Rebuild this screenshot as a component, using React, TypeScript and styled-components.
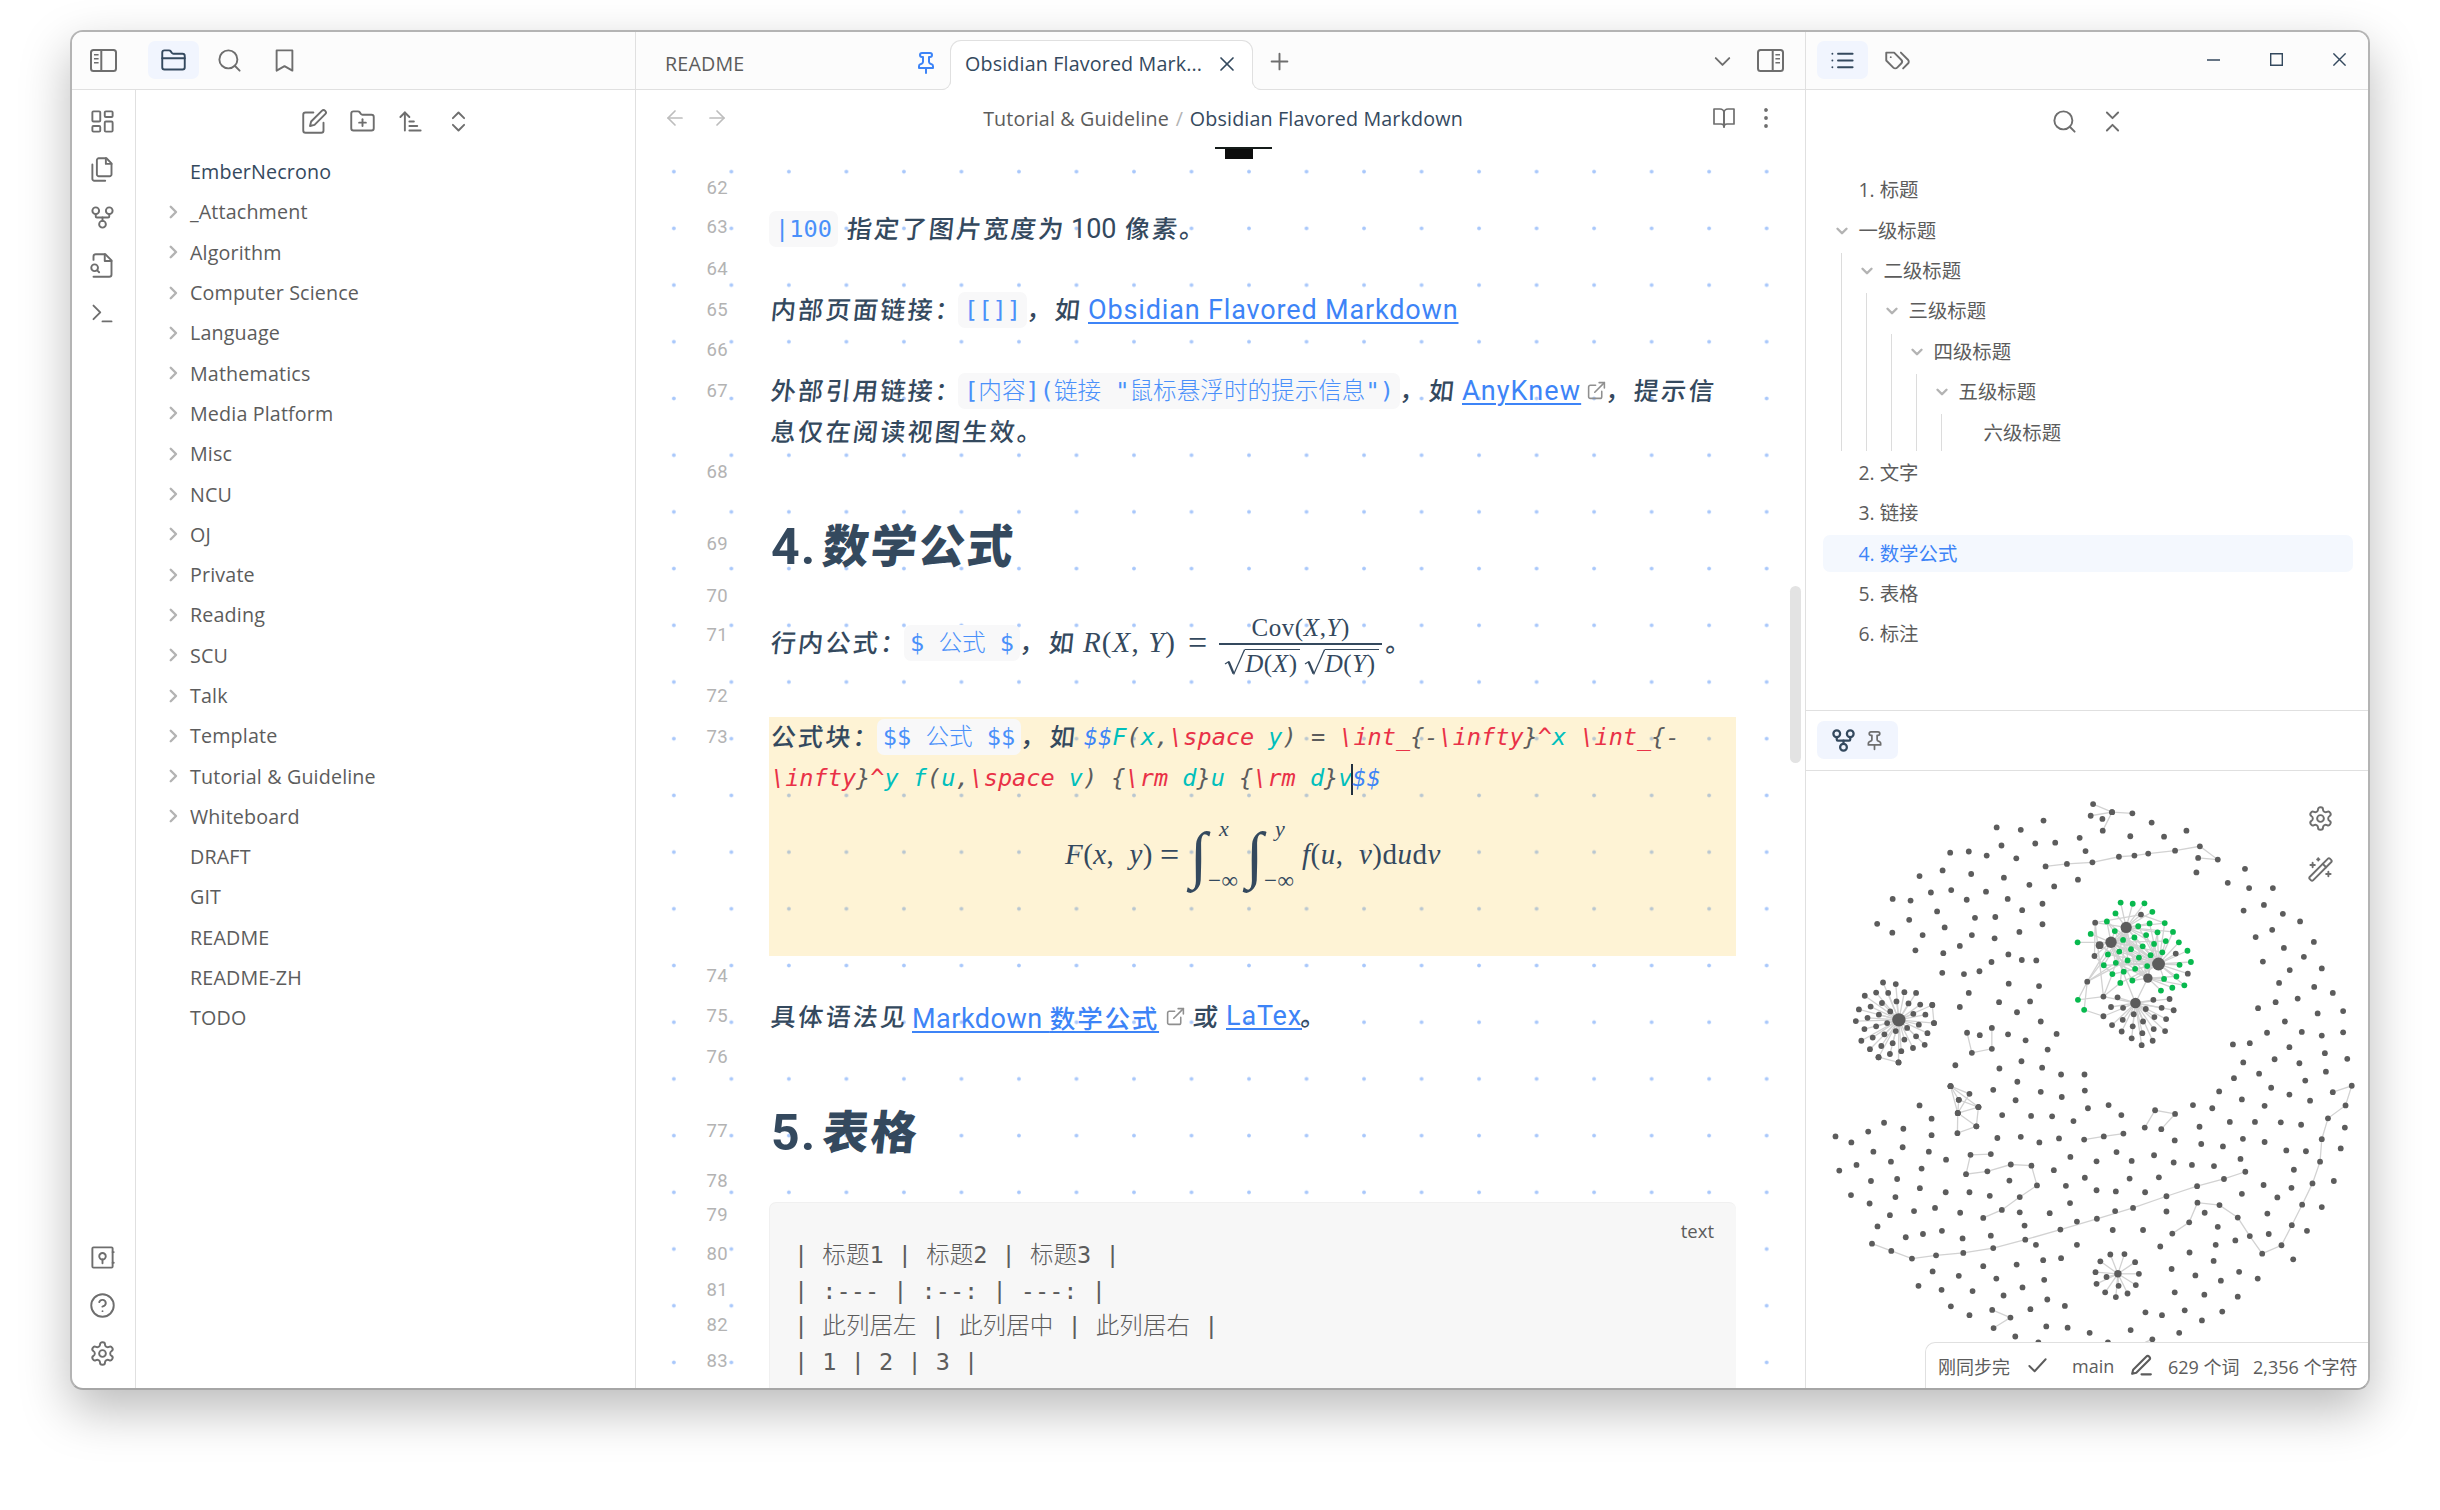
import React from "react";
import styled, { createGlobalStyle, css } from "styled-components";

const ui = `"Open Sans", "Noto Sans", "Noto Sans CJK SC", sans-serif`;
const prose = `Roboto, "Noto Sans CJK SC", sans-serif`;
const code = `"DejaVu Sans Mono", "Noto Sans CJK SC", monospace`;
const serif = `"Liberation Serif", serif`;

const ink = "#34495e";
const muted = "#5c5c5c";
const faint = "#b3b3b3";
const line = "#e0e0e0";
const blue = "#3d84f7";
const red = "#e93147";
const teal = "#00bfbc";

const Global = createGlobalStyle`
  * { box-sizing: border-box; }
  body { margin: 0; background: #fff; font-family: ${ui}; color: ${muted}; }
`;

/* ---------- icons ---------- */

const Svg = styled.svg<{ $size: number; $stroke: number }>`
  display: block;
  flex: none;
  width: ${(p) => p.$size}px;
  height: ${(p) => p.$size}px;
  fill: none;
  stroke: currentColor;
  stroke-width: ${(p) => p.$stroke};
  stroke-linecap: round;
  stroke-linejoin: round;
`;

const icons: Record<string, string[]> = {
  folder: ["M20 20a2 2 0 0 0 2-2V8a2 2 0 0 0-2-2h-7.9a2 2 0 0 1-1.69-.9L9.6 3.9A2 2 0 0 0 7.93 3H4a2 2 0 0 0-2 2v13a2 2 0 0 0 2 2Z", "M2 10h20"],
  search: ["M11 3a8 8 0 1 0 0 16a8 8 0 1 0 0-16", "m21 21-4.3-4.3"],
  bookmark: ["m19 21-7-4-7 4V3h14z"],
  dashboard: ["M4 3h5a1 1 0 0 1 1 1v7a1 1 0 0 1-1 1H4a1 1 0 0 1-1-1V4a1 1 0 0 1 1-1z", "M15 3h5a1 1 0 0 1 1 1v3a1 1 0 0 1-1 1h-5a1 1 0 0 1-1-1V4a1 1 0 0 1 1-1z", "M15 12h5a1 1 0 0 1 1 1v7a1 1 0 0 1-1 1h-5a1 1 0 0 1-1-1v-7a1 1 0 0 1 1-1z", "M4 16h5a1 1 0 0 1 1 1v3a1 1 0 0 1-1 1H4a1 1 0 0 1-1-1v-3a1 1 0 0 1 1-1z"],
  files: ["M15.5 2H8.6c-.4 0-.8.2-1.1.5-.3.3-.5.7-.5 1.1v12.8c0 .4.2.8.5 1.1.3.3.7.5 1.1.5h9.8c.4 0 .8-.2 1.1-.5.3-.3.5-.7.5-1.1V6.5L15.5 2z", "M3 7.6v12.8c0 .4.2.8.5 1.1.3.3.7.5 1.1.5h9.8", "M15 2v5h5"],
  fork: ["M12 15a3 3 0 1 0 0 6a3 3 0 1 0 0-6", "M6 3a3 3 0 1 0 0 6a3 3 0 1 0 0-6", "M18 3a3 3 0 1 0 0 6a3 3 0 1 0 0-6", "M18 9v2c0 .6-.4 1-1 1H7c-.6 0-1-.4-1-1V9", "M12 12v3"],
  fileSearch: ["M4 22h14a2 2 0 0 0 2-2V7.5L14.5 2H6a2 2 0 0 0-2 2v3", "M14 2v6h6", "M5 11a3 3 0 1 0 0 6a3 3 0 1 0 0-6", "m9 18-1.5-1.5"],
  terminal: ["m4 17 6-6-6-6", "M12 19h8"],
  vault: ["M4 3h16a1 1 0 0 1 1 1v16a1 1 0 0 1-1 1H4a1 1 0 0 1-1-1V4a1 1 0 0 1 1-1z", "M12 8a2.9 2.9 0 1 0 0 5.8a2.9 2.9 0 1 0 0-5.8", "M12 13.8v3.4", "M21 7.2h1", "M21 16.6h1"],
  help: ["M12 2a10 10 0 1 0 0 20a10 10 0 1 0 0-20", "M9.09 9a3 3 0 0 1 5.83 1c0 2-3 3-3 3", "M12 17h.01"],
  settings: ["M12.22 2h-.44a2 2 0 0 0-2 2v.18a2 2 0 0 1-1 1.73l-.43.25a2 2 0 0 1-2 0l-.15-.08a2 2 0 0 0-2.73.73l-.22.38a2 2 0 0 0 .73 2.73l.15.1a2 2 0 0 1 1 1.72v.51a2 2 0 0 1-1 1.74l-.15.09a2 2 0 0 0-.73 2.73l.22.38a2 2 0 0 0 2.73.73l.15-.08a2 2 0 0 1 2 0l.43.25a2 2 0 0 1 1 1.73V20a2 2 0 0 0 2 2h.44a2 2 0 0 0 2-2v-.18a2 2 0 0 1 1-1.73l.43-.25a2 2 0 0 1 2 0l.15.08a2 2 0 0 0 2.73-.73l.22-.39a2 2 0 0 0-.73-2.73l-.15-.08a2 2 0 0 1-1-1.74v-.5a2 2 0 0 1 1-1.74l.15-.09a2 2 0 0 0 .73-2.73l-.22-.38a2 2 0 0 0-2.73-.73l-.15.08a2 2 0 0 1-2 0l-.43-.25a2 2 0 0 1-1-1.73V4a2 2 0 0 0-2-2z", "M12 9a3 3 0 1 0 0 6a3 3 0 1 0 0-6"],
  edit: ["M11 4H4a2 2 0 0 0-2 2v14a2 2 0 0 0 2 2h14a2 2 0 0 0 2-2v-7", "M18.5 2.5a2.12 2.12 0 0 1 3 3L12 15l-4 1 1-4Z"],
  folderPlus: ["M12 10v6", "M9 13h6", "M20 20a2 2 0 0 0 2-2V8a2 2 0 0 0-2-2h-7.9a2 2 0 0 1-1.69-.9L9.6 3.9A2 2 0 0 0 7.93 3H4a2 2 0 0 0-2 2v13a2 2 0 0 0 2 2Z"],
  sort: ["m3 8 4-4 4 4", "M7 4v16", "M11 12h4", "M11 16h7", "M11 20h10"],
  expand: ["m7 15 5 5 5-5", "m7 9 5-5 5 5"],
  collapse: ["m7 20 5-5 5 5", "m7 4 5 5 5-5"],
  pin: ["M12 17v5", "M5 17h14v-1.76a2 2 0 0 0-1.11-1.79l-1.78-.9A2 2 0 0 1 15 10.76V6h1a2 2 0 0 0 0-4H8a2 2 0 0 0 0 4h1v4.76a2 2 0 0 1-1.11 1.79l-1.78.9A2 2 0 0 0 5 15.24Z"],
  close: ["M18 6 6 18", "m6 6 12 12"],
  plus: ["M5 12h14", "M12 5v14"],
  down: ["m6 9 6 6 6-6"],
  right: ["m9 5 7 7-7 7"],
  back: ["m12 19-7-7 7-7", "M19 12H5"],
  forward: ["M5 12h14", "m12 5 7 7-7 7"],
  book: ["M2 3h6a4 4 0 0 1 4 4v14a3 3 0 0 0-3-3H2z", "M22 3h-6a4 4 0 0 0-4 4v14a3 3 0 0 1 3-3h7z"],
  more: ["M12 11.2a.8.8 0 1 0 0 1.6a.8.8 0 1 0 0-1.6", "M12 3.2a.8.8 0 1 0 0 1.6a.8.8 0 1 0 0-1.6", "M12 19.2a.8.8 0 1 0 0 1.6a.8.8 0 1 0 0-1.6"],
  list: ["M8 6h13", "M8 12h13", "M8 18h13", "M3 6h.01", "M3 12h.01", "M3 18h.01"],
  tags: ["M9 5H2v7l6.29 6.29c.94.94 2.48.94 3.42 0l3.58-3.58c.94-.94.94-2.48 0-3.42L9 5Z", "M6 9.01V9", "m15 5 6.3 6.3a2.4 2.4 0 0 1 0 3.4L17 19"],
  wand: ["m21.64 3.64-1.28-1.28a1.21 1.21 0 0 0-1.72 0L2.36 18.64a1.21 1.21 0 0 0 0 1.72l1.28 1.28a1.2 1.2 0 0 0 1.72 0L21.64 5.36a1.2 1.2 0 0 0 0-1.72Z", "m14 7 3 3", "M5 6v4", "M19 14v4", "M10 2v2", "M7 8H3", "M21 16h-4", "M11 3H9"],
  check: ["M20.5 5.5 9 18l-5.5-5.5"],
  pen: ["M12 20.5h9", "M16.5 3.5a2.12 2.12 0 0 1 3 3L7 19l-4 1 1-4Z"],
  external: ["M18 13v6a2 2 0 0 1-2 2H5a2 2 0 0 1-2-2V8a2 2 0 0 1 2-2h6", "M15 3h6v6", "M10 14 21 3"],
};

const Icon = ({ name, size = 27, stroke = 1.7 }: { name: string; size?: number; stroke?: number }) => (
  <Svg viewBox="0 0 24 24" $size={size} $stroke={stroke}>
    {icons[name].map((d) => (
      <path key={d} d={d} />
    ))}
  </Svg>
);

const PanelSvg = styled.svg<{ $flip?: boolean }>`
  display: block;
  width: 27px;
  height: 23px;
  fill: none;
  stroke: currentColor;
  stroke-width: 2;
  transform: ${(p) => (p.$flip ? "scaleX(-1)" : "none")};
`;

const PanelIcon = ({ flip }: { flip?: boolean }) => (
  <PanelSvg $flip={flip} viewBox="0 0 27 23">
    <rect x="1" y="1" width="25" height="21" rx="2.5" />
    <path d="M11.3 1v21" />
    <path d="M4 5.8h4.6M4 9.8h4.6M4 13.8h4.6" strokeWidth="1.6" />
  </PanelSvg>
);

/* ---------- window frame ---------- */

const Desktop = styled.div`
  width: 2440px;
  height: 1510px;
  padding: 30px 70px;
  overflow: hidden;
`;

const Window = styled.div`
  display: flex;
  width: 2300px;
  height: 1360px;
  border: 2px solid #b4b4b4;
  border-bottom-color: #a6a6a6;
  border-radius: 13px;
  overflow: hidden;
  background: #fff;
  box-shadow: 0 20px 50px rgba(0, 0, 0, 0.27);
`;

const Column = styled.section<{ $w: number; $edge?: boolean }>`
  display: flex;
  flex-direction: column;
  flex: none;
  width: ${(p) => p.$w}px;
  height: 100%;
  border-right: ${(p) => (p.$edge ? `1px solid ${line}` : "none")};
`;

const Bar = styled.header`
  display: flex;
  align-items: flex-start;
  flex: none;
  height: 58px;
  background: #fcfcfc;
  border-bottom: 1px solid ${line};
`;

const Spacer = styled.div`
  flex: 1;
`;

const IconButton = styled.div<{ $w?: number; $h?: number; $on?: boolean; $tone?: string }>`
  display: flex;
  align-items: center;
  justify-content: center;
  flex: none;
  gap: 7px;
  width: ${(p) => p.$w ?? 48}px;
  height: ${(p) => p.$h ?? 48}px;
  border-radius: 7px;
  background: ${(p) => (p.$on ? "#f1f5fe" : "transparent")};
  color: ${(p) => p.$tone ?? (p.$on ? ink : "#6e6e6e")};
`;

const LeftTabs = styled.div`
  display: flex;
  gap: 4.5px;
  padding: 9px 0 0 18px;
`;

const ToggleSlot = styled.div<{ $pad: string }>`
  padding: ${(p) => p.$pad};
  color: #6e6e6e;
`;

/* ---------- left side ---------- */

const SideBody = styled.div`
  display: flex;
  flex: 1;
  min-height: 0;
`;

const Ribbon = styled.nav`
  display: flex;
  flex-direction: column;
  align-items: center;
  flex: none;
  width: 64px;
  padding: 7px 3px 11px 0;
  border-right: 1px solid ${line};
`;

const Explorer = styled.div`
  flex: 1;
  padding-top: 7.5px;
`;

const Tools = styled.div`
  display: flex;
  justify-content: center;
  padding-left: 2px;
`;

const Tree = styled.div`
  padding: 6px 0 0 29px;
`;

const TreeRow = styled.div<{ $strong?: boolean }>`
  display: flex;
  align-items: center;
  height: 40.3px;
  font-size: 19.7px;
  letter-spacing: 0.15px;
  color: ${(p) => (p.$strong ? ink : muted)};
`;

const Caret = styled.span`
  display: flex;
  flex: none;
  justify-content: center;
  width: 15px;
  margin-right: 10px;
  color: ${faint};
`;

const folders = ["_Attachment", "Algorithm", "Computer Science", "Language", "Mathematics", "Media Platform", "Misc", "NCU", "OJ", "Private", "Reading", "SCU", "Talk", "Template", "Tutorial & Guideline", "Whiteboard"];
const notes = ["DRAFT", "GIT", "README", "README-ZH", "TODO"];

const LeftSide = () => (
  <Column $w={564} $edge>
    <Bar>
      <ToggleSlot $pad="17px 13px 0 18px">
        <PanelIcon />
      </ToggleSlot>
      <LeftTabs>
        <IconButton $w={51} $h={38} $on><Icon name="folder" /></IconButton>
        <IconButton $w={51} $h={38}><Icon name="search" /></IconButton>
        <IconButton $w={51} $h={38}><Icon name="bookmark" /></IconButton>
      </LeftTabs>
    </Bar>
    <SideBody>
      <Ribbon>
        {["dashboard", "files", "fork", "fileSearch", "terminal"].map((n) => (
          <IconButton key={n}><Icon name={n} /></IconButton>
        ))}
        <Spacer />
        {["vault", "help", "settings"].map((n) => (
          <IconButton key={n}><Icon name={n} /></IconButton>
        ))}
      </Ribbon>
      <Explorer>
        <Tools>
          {["edit", "folderPlus", "sort", "expand"].map((n) => (
            <IconButton key={n}><Icon name={n} /></IconButton>
          ))}
        </Tools>
        <Tree>
          <TreeRow $strong><Caret />EmberNecrono</TreeRow>
          {folders.map((f) => (
            <TreeRow key={f}><Caret><Icon name="right" size={18} stroke={3.2} /></Caret>{f}</TreeRow>
          ))}
          {notes.map((f) => (
            <TreeRow key={f}><Caret />{f}</TreeRow>
          ))}
        </Tree>
      </Explorer>
    </SideBody>
  </Column>
);

/* ---------- tabs and view header ---------- */

const Tab = styled.div<{ $active?: boolean; $w: number }>`
  position: relative;
  display: flex;
  align-items: center;
  justify-content: space-between;
  flex: none;
  width: ${(p) => p.$w}px;
  height: 50px;
  margin-top: 8px;
  font-size: 19.7px;
  letter-spacing: 0.15px;
  white-space: nowrap;
  ${(p) =>
    p.$active
      ? css`
          padding: 0 13px 4px 14px;
          color: ${ink};
          background: #fff;
          border: 1px solid ${line};
          border-bottom: 0;
          border-radius: 11px 11px 0 0;
          &::before,
          &::after {
            content: "";
            position: absolute;
            bottom: 0;
            width: 18px;
            height: 18px;
            border-radius: 50%;
            box-shadow: inset 0 0 0 1px ${line}, 0 0 0 12px #fff;
          }
          &::before {
            left: -18px;
            clip-path: inset(50% -1px 0 50%);
          }
          &::after {
            right: -18px;
            clip-path: inset(50% 50% 0 -1px);
          }
        `
      : css`
          padding: 0 12px 4px 29px;
        `}
`;

const Tone = styled.span<{ $c: string; $m?: number }>`
  margin: 0 ${(p) => p.$m ?? 0}px;
  color: ${(p) => p.$c};
`;

const ViewHeader = styled.div`
  display: flex;
  align-items: center;
  justify-content: space-between;
  flex: none;
  height: 56px;
  padding: 0 18px;
`;

const Group = styled.div<{ $w: number }>`
  display: flex;
  width: ${(p) => p.$w}px;
`;

const Crumbs = styled.div`
  margin-left: 5px;
  font-size: 19.7px;
  letter-spacing: 0.15px;
  white-space: pre;
`;

/* ---------- editor ---------- */

const Editor = styled.div`
  position: relative;
  flex: 1;
  min-height: 0;
  overflow: hidden;
  background-image: radial-gradient(circle at 50% 50%, #a9c8fb 1.4px, rgba(169, 200, 251, 0) 2.3px);
  background-size: 57.53px 56.71px;
  background-position: 9.1px -2.7px;
`;

const Thumb = styled.div`
  position: absolute;
  top: 440px;
  right: 4px;
  width: 11px;
  height: 177px;
  border-radius: 6px;
  background: #e3e3e3;
`;

const ImageTail = styled.div`
  display: flex;
  flex-direction: column;
  height: 22px;
  padding: 1px 0 0 579px;
  &::before {
    content: "";
    width: 57px;
    height: 2px;
    background: #151c1a;
  }
  &::after {
    content: "";
    width: 28px;
    height: 10px;
    margin-left: 10px;
    background: #0d0d0d;
  }
`;

const Row = styled.div<{ $h?: number }>`
  display: flex;
  height: ${(p) => p.$h ?? 40.5}px;
`;

const Num = styled.div<{ $top?: number }>`
  flex: none;
  width: 92px;
  margin-right: 41px;
  margin-top: ${(p) => p.$top ?? 0}px;
  font: 18.5px/40.5px ${prose};
  letter-spacing: 0.3px;
  text-align: right;
  color: ${faint};
`;

const Body = styled.div<{ $top?: number; $mark?: boolean }>`
  width: 967px;
  padding: ${(p) => p.$top ?? 0}px 0 0 2px;
  background: ${(p) => (p.$mark ? "rgba(252,193,45,.2)" : "none")};
`;

const Line = styled.div`
  display: flex;
  align-items: center;
  height: 40.5px;
  white-space: pre;
  font-family: ${prose};
  font-size: 27px;
  color: ${ink};
`;

const Zh = styled.span<{ $w?: number; $pad?: number }>`
  flex: none;
  width: ${(p) => (p.$w ? `${p.$w}px` : "auto")};
  padding: 0 0 3px ${(p) => p.$pad ?? 0}px;
  font-size: 25px;
  font-weight: 500;
  letter-spacing: 2.35px;
  transform: skewX(-6deg);
`;

const Latin = styled.span<{ $w?: number }>`
  flex: none;
  width: ${(p) => (p.$w ? `${p.$w}px` : "auto")};
`;

const Link = styled.a<{ $w?: number; $gap?: number }>`
  flex: none;
  width: ${(p) => (p.$w ? `${p.$w}px` : "auto")};
  color: ${blue};
  letter-spacing: ${(p) => p.$gap ?? 0.85}px;
  text-decoration: underline;
  text-decoration-thickness: 2px;
  text-underline-offset: 3px;
  b {
    font-size: 25.5px;
    font-weight: 500;
    letter-spacing: 1.8px;
  }
`;

const Ext = styled.span<{ $w: number }>`
  flex: none;
  width: ${(p) => p.$w}px;
  padding-left: 5px;
  color: #8f8f8f;
`;

const Code = styled.code<{ $w: number; $shift?: number }>`
  display: flex;
  align-items: center;
  justify-content: center;
  flex: none;
  width: ${(p) => p.$w}px;
  height: 36px;
  margin-left: ${(p) => p.$shift ?? 0}px;
  border-radius: 7px;
  background: #f8f8f9;
  font: 300 23.6px/36px ${code};
  color: #4a90fa;
`;

const Tex = styled.span`
  padding-top: 1px;
  font: italic 23.55px/40px ${code};
  color: ${muted};
  i { color: ${red}; }
  b { color: ${teal}; font-weight: 400; }
  u { color: ${blue}; text-decoration: none; }
`;

const Cursor = styled.span`
  display: inline-block;
  width: 2px;
  height: 31px;
  margin: 0 -1px;
  vertical-align: middle;
  background: #22303f;
`;

const H1 = styled.h1`
  display: flex;
  align-items: center;
  height: 60px;
  margin: 0;
  font: 700 50px/60px ${prose};
  color: ${ink};
`;

const HNum = styled.span`
  width: 52px;
  letter-spacing: 1px;
`;

const HText = styled.span`
  font-size: 46px;
  font-weight: 900;
  letter-spacing: 2px;
  transform: skewX(-6deg);
`;

/* formulas */

const Math = styled.span<{ $size?: number; $w?: number; $gap?: number }>`
  display: inline-flex;
  align-items: center;
  flex: none;
  width: ${(p) => (p.$w ? `${p.$w}px` : "auto")};
  font: ${(p) => p.$size ?? 29}px/1 ${serif};
  letter-spacing: ${(p) => p.$gap ?? 0}px;
  color: ${ink};
  white-space: pre;
`;

const Frac = styled.span`
  display: flex;
  flex-direction: column;
  align-items: center;
  flex: none;
  width: 163px;
  margin: 3px 0 0 12px;
`;

const FracTop = styled.span`
  display: flex;
  height: 29px;
  padding-bottom: 2px;
`;

const FracBottom = styled.span`
  display: flex;
  gap: 4px;
  width: 100%;
  height: 31px;
  padding: 4px 0 0 5px;
  border-top: 2px solid ${ink};
`;

const Radical = styled.svg`
  width: 21px;
  height: 28px;
  fill: none;
  stroke: ${ink};
`;

const Radicand = styled.span`
  width: 54.5px;
  height: 26px;
  padding-top: 2px;
  border-top: 1.5px solid ${ink};
  font: 25px/24px ${serif};
  letter-spacing: 0.6px;
`;

const Root = ({ v }: { v: string }) => (
  <Math>
    <Radical viewBox="0 0 21 28">
      <path d="M1 16l4-2.5" strokeWidth="1.2" />
      <path d="M4.6 13.6l5 12" strokeWidth="2.4" />
      <path d="M9.6 26.6L20.6 1.6" strokeWidth="1.2" />
    </Radical>
    <Radicand><em>D</em>(<em>{v}</em>)</Radicand>
  </Math>
);

const Display = styled.div`
  display: flex;
  align-items: center;
  height: 76px;
  margin-top: 18px;
  padding: 2px 0 0 294px;
`;

const Integral = styled.span`
  display: flex;
  align-items: center;
  flex: none;
  width: 56px;
  height: 66px;
`;

const IntSign = styled.span`
  width: 18px;
  font: 63px/66px ${serif};
  color: ${ink};
`;

const Limits = styled.span`
  display: flex;
  flex-direction: column;
  justify-content: space-between;
  height: 72px;
  font: 22px/20px ${serif};
  color: ${ink};
  em { padding-left: 11px; }
`;

const Low = styled.span`
  font-size: 23px;
  letter-spacing: 0.6px;
`;

const Bounds = ({ v }: { v: string }) => (
  <Integral>
    <IntSign>∫</IntSign>
    <Limits><em>{v}</em><Low>−∞</Low></Limits>
  </Integral>
);

/* fenced block */

const Fence = styled.div<{ $first?: boolean }>`
  display: flex;
  justify-content: space-between;
  width: 967px;
  padding: 0 22px 0 24px;
  background: #f7f7f7;
  border-left: 1px solid #f0f0f0;
  ${(p) => p.$first && "border-top: 1px solid #f0f0f0; border-radius: 7px 7px 0 0;"}
  font: 300 23.55px/35.7px ${code};
  color: ${muted};
  white-space: pre;
`;

const Lang = styled.span`
  height: 10px;
  padding-top: 10px;
  font: 18.5px/36px ${ui};
`;

const fenceLines = ["| 标题1 | 标题2 | 标题3 |", "| :--- | :--: | ---: |", "| 此列居左 | 此列居中 | 此列居右 |", "| 1 | 2 | 3 |", "|    |    |    |"];

const Main = () => (
  <Column $w={1170} $edge>
    <Bar>
      <Tab $w={314}>README<Tone $c={blue}><Icon name="pin" size={24} stroke={2} /></Tone></Tab>
      <Tab $w={303} $active>Obsidian Flavored Mark...<Icon name="close" size={24} /></Tab>
      <ToggleSlot $pad="16px 0 0 13px"><Icon name="plus" /></ToggleSlot>
      <Spacer />
      <ToggleSlot $pad="16px 21px 0 0"><Icon name="down" /></ToggleSlot>
      <ToggleSlot $pad="17px 21px 0 0"><PanelIcon flip /></ToggleSlot>
    </Bar>
    <ViewHeader>
      <Group $w={84}>
        <IconButton $w={42} $tone="#bdbdbd"><Icon name="back" size={24} /></IconButton>
        <IconButton $w={42} $tone="#bdbdbd"><Icon name="forward" size={24} /></IconButton>
      </Group>
      <Crumbs>Tutorial &amp; Guideline <Tone $c={faint} $m={1.5}>/</Tone> <Tone $c={ink}>Obsidian Flavored Markdown</Tone></Crumbs>
      <Group $w={84}>
        <IconButton $w={42}><Icon name="book" size={24} /></IconButton>
        <IconButton $w={42}><Icon name="more" size={24} stroke={2.2} /></IconButton>
      </Group>
    </ViewHeader>
    <Editor>
      <ImageTail />
      <Row><Num>62</Num></Row>
      <Row>
        <Num $top={-2}>63</Num>
        <Body>
          <Line>
            <Code $w={69} $shift={-2}>|100</Code>
            <Zh $w={233} $pad={9}>指定了图片宽度为</Zh>
            <Latin $w={54}>100</Latin>
            <Zh>像素。</Zh>
          </Line>
        </Body>
      </Row>
      <Row><Num>64</Num></Row>
      <Row>
        <Num>65</Num>
        <Body>
          <Line>
            <Zh $w={187}>内部页面链接：</Zh>
            <Code $w={69}>[[]]</Code>
            <Zh $w={28}>，</Zh>
            <Zh $w={33}>如</Zh>
            <Link>Obsidian Flavored Markdown</Link>
          </Line>
        </Body>
      </Row>
      <Row><Num>66</Num></Row>
      <Row $h={81}>
        <Num>67</Num>
        <Body>
          <Line>
            <Zh $w={187}>外部引用链接：</Zh>
            <Code $w={442}>[内容](链接 "鼠标悬浮时的提示信息")</Code>
            <Zh $w={29}>，</Zh>
            <Zh $w={33}>如</Zh>
            <Link $w={119} $gap={1.1}>AnyKnew</Link>
            <Ext $w={25}><Icon name="external" size={21} stroke={1.8} /></Ext>
            <Zh $w={28}>，</Zh>
            <Zh>提示信</Zh>
          </Line>
          <Line><Zh>息仅在阅读视图生效。</Zh></Line>
        </Body>
      </Row>
      <Row><Num>68</Num></Row>
      <Row $h={82.5}>
        <Num $top={32}>69</Num>
        <Body $top={25}><H1><HNum>4.</HNum><HText>数学公式</HText></H1></Body>
      </Row>
      <Row><Num $top={1}>70</Num></Row>
      <Row $h={61}>
        <Num>71</Num>
        <Body $top={7.5}>
          <Line>
            <Zh $w={133}>行内公式：</Zh>
            <Code $w={116}>$ 公式 $</Code>
            <Zh $w={29}>，</Zh>
            <Zh $w={34}>如</Zh>
            <Math $w={105} $gap={1.1}><em>R</em>(<em>X</em>, <em>Y</em>)</Math>
            <Math $size={34}>=</Math>
            <Frac>
              <FracTop><Math $size={25} $gap={0.6}>Cov(<em>X</em>,<em>Y</em>)</Math></FracTop>
              <FracBottom><Root v="X" /><Root v="Y" /></FracBottom>
            </Frac>
            <Zh $pad={4}>。</Zh>
          </Line>
        </Body>
      </Row>
      <Row><Num>72</Num></Row>
      <Row $h={239}>
        <Num>73</Num>
        <Body $mark>
          <Line>
            <Zh $w={106}>公式块：</Zh>
            <Code $w={144}>$$ 公式 $$</Code>
            <Zh $w={29}>，</Zh>
            <Zh $w={34}>如</Zh>
            <Tex><u>$$</u><b>F</b>(<b>x</b>,<i>\space</i> <b>y</b>) = <i>\int_</i>{"{-"}<i>\infty</i>{"}"}<i>^</i><b>x</b> <i>\int_</i>{"{-"}</Tex>
          </Line>
          <Line>
            <Tex><i>\infty</i>{"}"}<i>^</i><b>y</b> <b>f</b>(<b>u</b>,<i>\space</i> <b>v</b>) {"{"}<i>\rm</i> <b>d</b>{"}"}<b>u</b> {"{"}<i>\rm</i> <b>d</b>{"}"}<b>v</b><Cursor /><u>$$</u></Tex>
          </Line>
          <Display>
            <Math $w={95} $gap={0.4}><em>F</em>(<em>x</em>,  <em>y</em>)</Math>
            <Math $size={34} $w={30}>=</Math>
            <Bounds v="x" />
            <Bounds v="y" />
            <Math $gap={0.5}><em>f</em>(<em>u</em>,  <em>v</em>)d<em>u</em>d<em>v</em></Math>
          </Display>
        </Body>
      </Row>
      <Row><Num>74</Num></Row>
      <Row>
        <Num>75</Num>
        <Body>
          <Line>
            <Zh $w={141}>具体语法见</Zh>
            <Link $w={248} $gap={0.5}>Markdown <b>数学公式</b></Link>
            <Ext $w={33}><Icon name="external" size={21} stroke={1.8} /></Ext>
            <Zh $w={33}>或</Zh>
            <Link $w={75}>LaTex</Link>
            <Zh>。</Zh>
          </Line>
        </Body>
      </Row>
      <Row><Num>76</Num></Row>
      <Row $h={83.5}>
        <Num $top={34}>77</Num>
        <Body $top={26}><H1><HNum>5.</HNum><HText>表格</HText></H1></Body>
      </Row>
      <Row $h={41.5}><Num>78</Num></Row>
      <Row $h={36}>
        <Num $top={-7}>79</Num>
        <Fence $first><span /><Lang>text</Lang></Fence>
      </Row>
      {fenceLines.map((l, i) => (
        <Row $h={35.7} key={i}>
          <Num $top={-4}>{i < 4 ? 80 + i : ""}</Num>
          <Fence>{l}</Fence>
        </Row>
      ))}
      <Thumb />
    </Editor>
  </Column>
);

/* ---------- right side ---------- */

const Outline = styled.div`
  flex: none;
  height: 621px;
  padding-top: 7.5px;
  border-bottom: 1px solid ${line};
`;

const OutlineTree = styled.div`
  padding: 26.5px 15px 0 17px;
`;

const OutlineRow = styled.div<{ $on?: boolean }>`
  display: flex;
  align-items: center;
  height: 36.7px;
  margin-bottom: 3.7px;
  padding-left: 10px;
  border-radius: 7px;
  font-size: 19.4px;
  line-height: 36px;
  white-space: pre;
  background: ${(p) => (p.$on ? "#f4f8fe" : "none")};
  color: ${(p) => (p.$on ? blue : muted)};
`;

const OutlineCaret = styled.span`
  display: flex;
  width: 17px;
  margin-right: 8.5px;
  color: ${faint};
`;

const Nest = styled.div`
  margin-left: 18px;
  padding-left: 6px;
  border-left: 1px solid #dcdcdc;
`;

const levels = ["一级标题", "二级标题", "三级标题", "四级标题", "五级标题", "六级标题"];

const Level = ({ at }: { at: number }) => (
  <>
    <OutlineRow>
      <OutlineCaret>{at < 5 && <Icon name="down" size={18} stroke={3.2} />}</OutlineCaret>
      {levels[at]}
    </OutlineRow>
    {at < 5 && <Nest><Level at={at + 1} /></Nest>}
  </>
);

const GraphTabs = styled.div`
  flex: none;
  height: 60px;
  padding: 10px 0 0 11px;
  border-bottom: 1px solid ${line};
`;

const WinButtons = styled.div`
  display: flex;
  gap: 50px;
  padding: 21px 22.5px 0 0;
  color: ${ink};
`;

const WinSvg = styled.svg`
  width: 13px;
  height: 13px;
  fill: none;
  stroke: currentColor;
  stroke-width: 1.4;
`;

const GraphPane = styled.div`
  position: relative;
  flex: 1;
  min-height: 0;
`;

const GraphSvg = styled.svg`
  display: block;
  width: 562px;
  height: 617px;
`;

const GraphTools = styled.div`
  position: absolute;
  top: 22px;
  right: 22px;
  display: flex;
  flex-direction: column;
`;

const Status = styled.footer`
  position: absolute;
  right: 0;
  bottom: 0;
  display: flex;
  align-items: center;
  width: 443px;
  height: 46px;
  padding: 0 0 0 12px;
  border: 1px solid ${line};
  border-width: 1px 0 0 1px;
  border-radius: 10px 0 0 0;
  background: #fff;
  font-size: 18px;
  font-weight: 400;
  white-space: nowrap;
`;

const StatusItem = styled.span<{ $w: number }>`
  flex: none;
  width: ${(p) => p.$w}px;
`;

type P = [number, number];
const KX = 0.34439;
const KY = 0.40179;
const pts = (s: string): P[] =>
  s.trim().split(/\s+/).map((t) => {
    const [x, y] = t.split(",").map(Number);
    return [14 + x * KX, 9 + y * KY];
  });

const loose = pts(`513,118 583,124 649,101 527,163 625,158 683,156 754,144 771,177 820,97 901,140 963,106 999,141 1064,126 378,181 432,178 484,188 570,195
289,239 356,225 439,234 534,243 608,261 680,265 749,248 211,296 263,300 322,280 381,274 426,298 482,278 545,296 587,324 646,308 340,327 259,348 166,358
210,380 362,367 450,343 509,341 646,359 579,378 298,386 441,386 507,394 277,424 358,431 406,413 547,434 586,448 628,449 498,453 355,480 418,483 463,476
548,507 636,513 432,530 520,553 610,551 406,565 572,578 641,601 687,632 464,635 546,633 597,648 661,671 393,710 521,718 585,700 645,716 700,733 768,733
573,751 503,771 641,776 769,773 702,789 568,797 289,810 324,843 529,834 613,836 674,837 736,849 778,817 838,809 875,834 186,853 242,868 140,875 45,887
91,902 324,884 240,914 155,925 316,925 206,950 366,945 106,958 56,972 295,967 148,998 224,993 290,1016 365,1026 434,1026 493,1035 550,997 219,1038
90,1033 144,1054 334,1065 273,1073 407,1077 203,1083 580,1076 667,1078 726,1053 714,1010 679,971 727,938 637,902 694,892 583,888 515,891 167,1111
594,1109 249,1138 299,1130 354,1122 414,1141 496,1134 627,1157 746,1157 746,1099 769,990 803,949 861,926 905,948 970,934 803,1021 859,1024 899,992
944,1026 984,989 1030,897 1027,952 1080,958 1144,961 1107,906 1170,912 1102,863 1083,809 1139,817 1159,775 1202,742 1229,703 1275,731 1298,629 1248,655
1199,658 1225,795 1190,851 1263,851 1310,766 1291,811 1228,893 1221,943 1291,901 1320,695 1363,665 1350,601 1392,705 1363,783 1409,748 1338,852 1397,858
1354,922 1411,924 1423,798 1469,726 1466,680 1531,694 1519,628 1519,575 1457,636 1399,627 1445,581 1489,530 1387,544 1435,515 1323,553 1333,505 1272,568
1286,452 1364,473 1457,469 1405,440 1347,418 1265,391 1313,373 1434,403 1394,352 1344,333 1230,325 1289,311 1315,269 1246,269 1184,256 1234,221 1093,230
1524,865 1512,917 1492,998 1457,1063 1376,970 1369,1015 1414,1122 1374,1193 1288,1008 1328,1039 1225,1030 1299,1079 1303,1130 1155,1112 1117,1077
1206,1146 1149,1157 1143,1197 1217,1224 1271,1241 1213,1286 1164,1246 1116,1281 1090,1233 1073,1176 1021,1217 1030,1275 988,1161 1006,1074 938,1120
850,1120 857,1073 327,1223 403,1234 474,1210 571,1206 648,1195 700,1190 512,1241 588,1263 651,1244 286,1259 353,1269 443,1272 533,1283 380,1310 434,1332
611,1317 660,1293 711,1309 657,1360 719,1363 783,1376 902,1369 945,1325 993,1332 1059,1320 1109,1345 1168,1323 1043,1376 567,1385 634,1400 836,1400 965,1392
932,335 799,355 797,438 776,502 1033,432 1068,482`);

const chains = [
  "655,215 717,209 791,205 868,191 913,188 953,183 1031,176 1103,165 1155,198 1098,194",
  "793,60 848,80 907,83",
  "786,89 848,80 821,126",
  "427,629 441,679 499,669 499,617",
  "400,829 379,762 434,781 400,829 460,814 454,862 399,879 400,829 454,862",
  "379,762 403,796 460,814",
  "379,762 460,814",
  "400,829 403,796",
  "496,931 437,933 424,981 486,974 554,957 614,960 630,1009 580,1038 528,1070 474,1090",
  "767,895 824,887 881,880",
  "943,865 973,822 1031,831 991,869",
  "1023,1129 1072,1101 1096,1052 1160,1058 1213,1089 1248,1135 1284,1179 1340,1158 1370,1108 1400,1057 1430,1004 1452,950 1457,894 1475,842 1526,810 1544,761 1489,777",
  "151,1154 207,1172 267,1191 337,1183 416,1177 503,1165 596,1144 698,1119 804,1092 909,1065 1006,1036 1095,1011 1173,993 1235,975",
  "500,1319 553,1338 504,1364",
  "326,560 331,605",
  "170,690 228,703",
].map(pts);

const stars = [
  { hub: "229,597", r: 6.7, rays: "183,504 220,508 130,537 163,529 198,530 245,528 279,530 113,571 147,564 180,555 222,551 257,556 291,559 326,560 104,600 138,592 171,584 204,576 271,582 306,584 195,605 163,613 129,620 287,609 331,605 253,617 220,625 187,633 153,641 120,649 279,638 312,630 245,646 211,655 178,662 145,670 270,667 304,659 236,675 203,682 170,690 228,703" },
  { hub: "865,1229", r: 3.7, rays: "843,1181 884,1180 814,1198 915,1200 800,1225 926,1229 832,1237 803,1254 867,1259 917,1257 828,1275 893,1278 859,1287" },
  { hub: "916,555", r: 5.3, rays: "823,539 864,541 968,547 1015,545 845,565 880,567 946,570 992,567 1027,573 911,583 971,590 823,588 879,597 938,601 1005,595 848,610 908,613 969,620 1002,625 876,626 936,630 905,643 966,649 934,660" },
].map((s) => ({ hub: pts(s.hub)[0], r: s.r, rays: pts(s.rays) }));

const [hubA, hubB, hubC, hubD, hubE, hubF] = pts("889,367 845,404 983,458 952,493 812,411 916,555");
const core = pts(`833,352 957,357 924,364 980,379 856,376 947,386 913,392 880,398 1004,401 970,408 937,414 903,421 869,427 836,434 994,429 960,436 926,442 893,449 859,455 824,461 950,463 915,470 882,477 849,483 907,499 872,505`);
const rimTop = pts("873,305 908,308 942,307 858,332 965,328 932,335 799,355 1001,356 1025,378");
const rimLeft = pts("786,383 748,404 797,438 812,411 776,502");
const rimRight = pts("1001,356 1025,378 1042,404 1067,425 1077,453 1044,460 1035,489 999,495 1058,511 1033,432 1068,482");
const rimLow = pts("999,495 1023,517 990,524 1058,511 1035,489");
const strays = pts("749,547 767,572");
const green = [...core, ...rimTop.filter((_, i) => i !== 5 && i !== 6), ...rimLeft.slice(0, 2), ...rimRight.slice(2, 9), ...rimLow.slice(1, 3), ...strays];

const webEdges: [P, P][] = [
  ...core.flatMap((p, i): [P, P][] => [[p, hubC], [p, i % 2 ? hubA : hubB], ...(i % 3 === 0 ? ([[p, hubD]] as [P, P][]) : [])]),
  ...rimTop.map((p): [P, P] => [p, hubA]),
  ...rimLeft.map((p): [P, P] => [p, hubB]),
  ...rimRight.map((p): [P, P] => [p, hubC]),
  ...rimLow.map((p): [P, P] => [p, hubD]),
  [hubA, hubC], [hubB, hubC], [hubA, hubB], [hubB, hubF], [hubD, hubF], [hubE, hubD],
];
const webChains = [
  "823,539 749,547 776,502 767,572 823,588",
  "797,438 799,355 823,539 849,483",
  "776,502 859,455",
  "776,502 893,449",
  "776,502 836,434",
  "797,438 849,483",
  "823,539 872,505",
  "799,355 932,335 1001,356",
  "965,1392 945,1399",
].map(pts);

const poly = (c: P[]) => c.map((p) => p.join(",")).join(" ");
const dots = [...loose, ...chains.flat(), ...stars.flatMap((s) => s.rays)];

const Graph = () => (
  <GraphSvg viewBox="0 0 562 617">
    <g stroke="#d2d2d2" strokeWidth="1.3" fill="none">
      {[...chains, ...webChains].map((c, i) => <polyline key={i} points={poly(c)} />)}
      {stars.flatMap((s, k) => s.rays.map((p, i) => <line key={`${k}-${i}`} x1={s.hub[0]} y1={s.hub[1]} x2={p[0]} y2={p[1]} />))}
      {webEdges.map(([a, b], i) => <line key={`w${i}`} x1={a[0]} y1={a[1]} x2={b[0]} y2={b[1]} />)}
    </g>
    <g fill={muted}>
      {dots.map((p, i) => <circle key={i} cx={p[0]} cy={p[1]} r="2.9" />)}
      {stars.map((s, i) => <circle key={i} cx={s.hub[0]} cy={s.hub[1]} r={s.r} />)}
    </g>
    <g fill="#08b94e">
      {green.map((p, i) => <circle key={i} cx={p[0]} cy={p[1]} r="2.9" />)}
    </g>
    <g fill={muted}>
      {([[hubA, 5.6], [hubB, 5.7], [hubC, 6.4], [hubD, 4.7], [hubE, 3.9]] as [P, number][]).map(([p, r], i) => (
        <circle key={i} cx={p[0]} cy={p[1]} r={r} />
      ))}
    </g>
  </GraphSvg>
);

const RightTabs = styled.div`
  display: flex;
  gap: 3.5px;
  padding: 9px 0 0 11px;
`;

const RightSide = () => (
  <Column $w={562}>
    <Bar>
      <RightTabs>
        <IconButton $w={51} $h={38} $on><Icon name="list" /></IconButton>
        <IconButton $w={51} $h={38}><Icon name="tags" /></IconButton>
      </RightTabs>
      <Spacer />
      <WinButtons>
        <WinSvg viewBox="0 0 13 13"><path d="M0 7h13" /></WinSvg>
        <WinSvg viewBox="0 0 13 13"><path d="M.7.7h11.6v11.6H.7z" /></WinSvg>
        <WinSvg viewBox="0 0 13 13"><path d="M.4.4l12.2 12.2M12.6.4L.4 12.6" /></WinSvg>
      </WinButtons>
    </Bar>
    <Outline>
      <Tools>
        <IconButton><Icon name="search" /></IconButton>
        <IconButton><Icon name="collapse" /></IconButton>
      </Tools>
      <OutlineTree>
        <OutlineRow><OutlineCaret />1. 标题</OutlineRow>
        <Level at={0} />
        <OutlineRow><OutlineCaret />2. 文字</OutlineRow>
        <OutlineRow><OutlineCaret />3. 链接</OutlineRow>
        <OutlineRow $on><OutlineCaret />4. 数学公式</OutlineRow>
        <OutlineRow><OutlineCaret />5. 表格</OutlineRow>
        <OutlineRow><OutlineCaret />6. 标注</OutlineRow>
      </OutlineTree>
    </Outline>
    <GraphTabs>
      <IconButton $w={81} $h={38} $on><Icon name="fork" stroke={2} /><Tone $c="#6e6e6e"><Icon name="pin" size={21} stroke={2} /></Tone></IconButton>
    </GraphTabs>
    <GraphPane>
      <Graph />
      <GraphTools>
        <IconButton $h={51} $w={51}><Icon name="settings" /></IconButton>
        <IconButton $h={51} $w={51}><Icon name="wand" /></IconButton>
      </GraphTools>
      <Status>
        <StatusItem $w={88}>刚同步完</StatusItem>
        <StatusItem $w={46}><Icon name="check" size={23} stroke={2} /></StatusItem>
        <StatusItem $w={57}>main</StatusItem>
        <StatusItem $w={39}><Icon name="pen" size={25} stroke={2} /></StatusItem>
        <StatusItem $w={85}>629 个词</StatusItem>
        <StatusItem $w={110}>2,356 个字符</StatusItem>
      </Status>
    </GraphPane>
  </Column>
);

export default function App() {
  return (
    <>
      <Global />
      <Desktop>
        <Window>
          <LeftSide />
          <Main />
          <RightSide />
        </Window>
      </Desktop>
    </>
  );
}
